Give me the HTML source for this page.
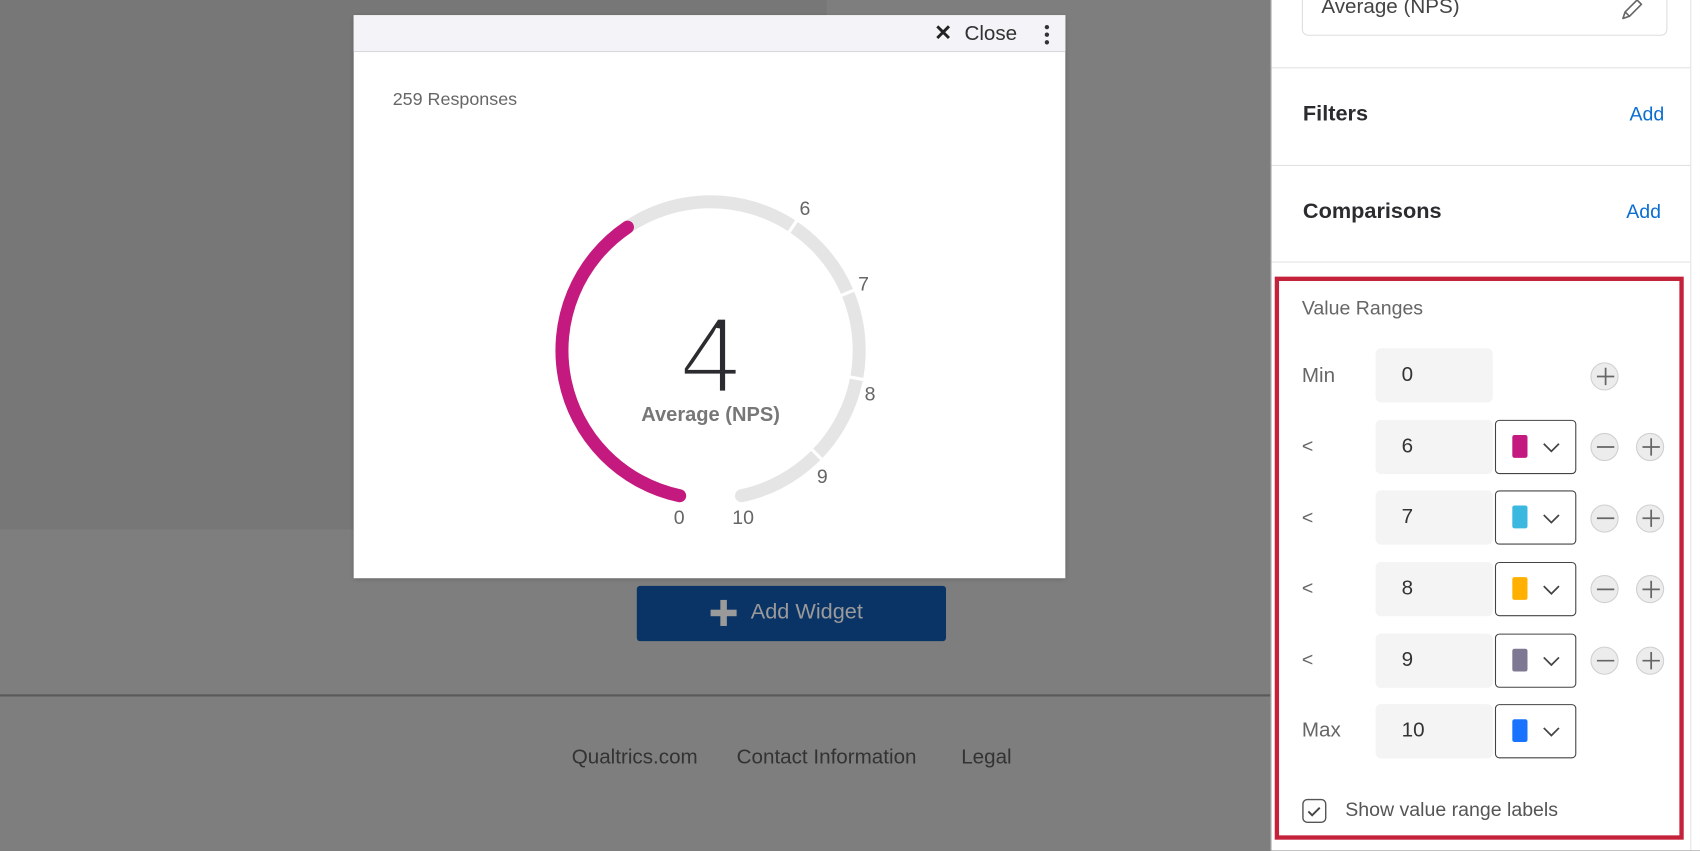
<!DOCTYPE html>
<html><head><meta charset="utf-8"><style>
*{margin:0;padding:0;box-sizing:border-box}
html,body{width:1700px;height:850px;overflow:hidden;background:#7e7e7e;font-family:"Liberation Sans",sans-serif}
#w{position:absolute;left:0;top:0;width:1567px;height:784px;transform:scale(1.08487);transform-origin:0 0}
.a{position:absolute;white-space:nowrap}
.inp{position:absolute;left:1268px;width:108px;height:50px;background:#f4f4f4;border-radius:5px;font-size:19px;color:#333;padding:14px 0 0 24px}
.sel{position:absolute;left:1378px;width:75px;height:50px;border:1px solid #444;border-radius:4px;background:#fff}
.sw{position:absolute;left:15px;top:13px;width:14px;height:21px;border-radius:2px}
.btn{position:absolute;width:26px;height:26px;border-radius:50%;background:#ececec;border:1px solid #d0d0d0}
.lbl{position:absolute;left:1200px;font-size:18px;color:#666}
</style></head><body><div id="w">
<div class="a" style="left:0;top:0;width:762px;height:488px;background:#777"></div>
<div class="a" style="left:0;top:640px;width:1171px;height:2px;background:#5a5a5a"></div>
<div class="a" style="left:326px;top:14px;width:656px;height:519px;background:#fff;box-shadow:0 1px 4px rgba(0,0,0,.2)">
 <div style="height:34px;background:#f4f4f8;border-bottom:1px solid #d8d8dc;position:relative">
  <div class="a" style="left:535px;top:4px;font-size:20px;color:#222;font-weight:bold">✕</div>
  <div class="a" style="left:563px;top:7px;font-size:19px;color:#333">Close</div>
  <div class="a" style="left:637px;top:9px;width:4px;height:4px;border-radius:2px;background:#333;box-shadow:0 7px 0 #333,0 14px 0 #333"></div>
 </div>
 <div class="a" style="left:36px;top:69px;font-size:16.5px;color:#666">259 Responses</div>
</div>
<svg class="a" style="left:0;top:0" width="1171" height="784">
 <path d="M578.4 209.4 A137 137 0 1 1 683.5 457" fill="none" stroke="#e5e5e5" stroke-width="12" stroke-linecap="round"/>
 <path d="M626.5 457 A137 137 0 0 1 578.4 209.4" fill="none" stroke="#c41a7f" stroke-width="12" stroke-linecap="round"/>
 <g stroke="#fff" stroke-width="3">
  <line x1="725.8" y1="216.3" x2="735.8" y2="201.3"/>
  <line x1="772.8" y1="273.4" x2="789.8" y2="266.4"/>
  <line x1="780.6" y1="347" x2="798.6" y2="350.4"/>
  <line x1="746.3" y1="412.4" x2="759.5" y2="425.4"/>
 </g>
 <g font-family="Liberation Sans,sans-serif" font-size="18" fill="#666">
  <text x="737" y="198">6</text><text x="791" y="268">7</text><text x="797" y="369">8</text>
  <text x="753" y="445">9</text><text x="621" y="483">0</text><text x="675" y="483">10</text>
 </g>
 <text x="655" y="362" text-anchor="middle" font-family="Liberation Sans,sans-serif" font-size="100" fill="#2b2b30" stroke="#fff" stroke-width="3.5">4</text>
 <text x="655" y="388" text-anchor="middle" font-family="Liberation Sans,sans-serif" font-size="18.5" font-weight="bold" fill="#777">Average (NPS)</text>
</svg>
<div class="a" style="left:587px;top:540px;width:285px;height:51px;background:#0b3466;border-radius:3px">
 <div class="a" style="left:68px;top:22px;width:24px;height:6px;background:#9a9a9a"></div>
 <div class="a" style="left:77px;top:13px;width:6px;height:24px;background:#9a9a9a"></div>
 <div class="a" style="left:105px;top:13px;font-size:20px;color:#9a9a9a">Add Widget</div>
</div>
<div class="a" style="left:527px;top:688px;font-size:19px;color:#333">Qualtrics.com</div>
<div class="a" style="left:679px;top:688px;font-size:19px;color:#333">Contact Information</div>
<div class="a" style="left:886px;top:688px;font-size:19px;color:#333">Legal</div>
<div class="a" style="left:1171px;top:0;width:396px;height:784px;background:#fff;border-left:1px solid #999">
 <div class="a" style="left:386px;top:0;width:1px;height:784px;background:#e4e4e4"></div>
 <div class="a" style="left:28px;top:-10px;width:337px;height:43px;border:1px solid #ddd;border-radius:6px"></div>
 <div class="a" style="left:46px;top:-4px;font-size:19px;color:#444">Average (NPS)</div>
 <svg class="a" style="left:320px;top:-2px" width="26" height="22"><path d="M4 19 L6 13 L17 2 L21 6 L10 17 Z M6 13 L10 17" fill="none" stroke="#666" stroke-width="1.5" stroke-linejoin="round"/></svg>
 <div class="a" style="left:0;top:62px;width:386px;height:1px;background:#e2e2e2"></div>
 <div class="a" style="left:29px;top:94px;font-size:20px;font-weight:bold;color:#2b2b30">Filters</div>
 <div class="a" style="left:330px;top:95px;font-size:18px;color:#0b6ed0">Add</div>
 <div class="a" style="left:0;top:152px;width:386px;height:1px;background:#e2e2e2"></div>
 <div class="a" style="left:29px;top:184px;font-size:20px;font-weight:bold;color:#2b2b30">Comparisons</div>
 <div class="a" style="left:327px;top:185px;font-size:18px;color:#0b6ed0">Add</div>
 <div class="a" style="left:0;top:241px;width:386px;height:1px;background:#e2e2e2"></div>
</div>
<div class="a" style="left:1175px;top:255px;width:377px;height:519px;border:4px solid #c4213a"></div>
<div class="lbl" style="top:274px">Value Ranges</div>
<div class="lbl" style="top:336px;font-size:19px">Min</div>
<div class="inp" style="top:321px">0</div>
<div class="btn" style="left:1466px;top:334px"></div>
<div class="lbl" style="top:401px">&lt;</div><div class="inp" style="top:387px">6</div>
<div class="lbl" style="top:467px">&lt;</div><div class="inp" style="top:452px">7</div>
<div class="lbl" style="top:532px">&lt;</div><div class="inp" style="top:518px">8</div>
<div class="lbl" style="top:598px">&lt;</div><div class="inp" style="top:584px">9</div>
<div class="lbl" style="top:663px;font-size:19px">Max</div><div class="inp" style="top:649px">10</div>
<div class="sel" style="top:387px"><div class="sw" style="background:#c41a7f"></div></div>
<div class="sel" style="top:452px"><div class="sw" style="background:#3bb8e0"></div></div>
<div class="sel" style="top:518px"><div class="sw" style="background:#ffb000"></div></div>
<div class="sel" style="top:584px"><div class="sw" style="background:#7e7893"></div></div>
<div class="sel" style="top:649px"><div class="sw" style="background:#1a73ff"></div></div>
<div class="btn" style="left:1466px;top:399px"></div><div class="btn" style="left:1508px;top:399px"></div>
<div class="btn" style="left:1466px;top:465px"></div><div class="btn" style="left:1508px;top:465px"></div>
<div class="btn" style="left:1466px;top:530px"></div><div class="btn" style="left:1508px;top:530px"></div>
<div class="btn" style="left:1466px;top:596px"></div><div class="btn" style="left:1508px;top:596px"></div>
<svg class="a" style="left:0;top:0" width="1567" height="784" fill="none" stroke="#666" stroke-width="1.6">
 <path d="M1472 347 h16 M1480 339 v16"/>
 <g id="r"><path d="M1423 409 l7 7 l7 -7" stroke="#444"/><path d="M1472 412 h16"/><path d="M1514 412 h16 M1522 404 v16"/></g>
 <use href="#r" y="65.7"/><use href="#r" y="131.3"/><use href="#r" y="197"/>
 <path d="M1423 671 l7 7 l7 -7" stroke="#444"/>
 <rect x="1201" y="737" width="21" height="21" rx="4" stroke="#555" stroke-width="1.3"/>
 <path d="M1206 748 l3.5 3.5 l7 -7" stroke="#444" stroke-width="1.8"/>
</svg>
<div class="a" style="left:1240px;top:736px;font-size:18px;color:#555">Show value range labels</div>
</div></body></html>
